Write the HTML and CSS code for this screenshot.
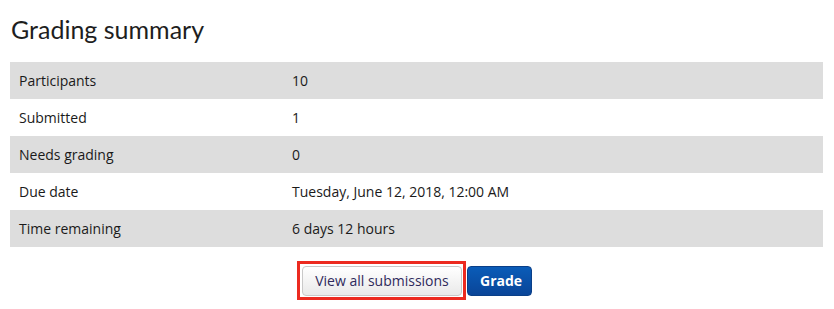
FILE: index.html
```html
<!DOCTYPE html>
<html lang="en">
<head>
<meta charset="utf-8">
<title>Grading summary</title>
<link rel="stylesheet" href="styles.css">
</head>
<body>
<div class="page">
  <h2 class="title">Grading summary</h2>
  <table class="summary">
    <tbody>
      <tr class="shade"><td class="label">Participants</td><td>10</td></tr>
      <tr><td class="label">Submitted</td><td>1</td></tr>
      <tr class="shade"><td class="label">Needs grading</td><td>0</td></tr>
      <tr><td class="label">Due date</td><td>Tuesday, June 12, 2018, 12:00 AM</td></tr>
      <tr class="shade"><td class="label">Time remaining</td><td>6 days 12 hours</td></tr>
    </tbody>
  </table>
  <div class="actions">
    <span class="highlight"><button class="btn btn-secondary" type="button">View all submissions</button></span>
    <button class="btn btn-primary" type="button">Grade</button>
  </div>
</div>
</body>
</html>
```

FILE: styles.css
```css
html, body {
  margin: 0;
  padding: 0;
  background: #ffffff;
}

.page {
  padding: 0 11px 0 10px;
  font-family: "Open Sans", "Liberation Sans", sans-serif;
  font-size: 14px;
  color: #1a1a1a;
}

.title {
  margin: 0;
  padding: 14px 0 0 1px;
  height: 62px;
  box-sizing: border-box;
  font-family: "Lato", "Open Sans", sans-serif;
  font-weight: 400;
  font-size: 25px;
  line-height: 30px;
  color: #1e1e1e;
}

.summary {
  width: 100%;
  border-collapse: collapse;
}

.summary td {
  padding: 8px 9px;
  line-height: 21px;
  vertical-align: top;
}

.summary td.label {
  width: 255px;
}

.summary tr.shade td {
  background: #dddddd;
}

.actions {
  display: flex;
  justify-content: center;
  align-items: center;
  gap: 1px;
  padding: 14px 4px 0 0;
}

.highlight {
  display: inline-flex;
  border: 3px solid #ec2a20;
  padding: 2px 1px 1px 2px;
}

.btn {
  font-family: "Open Sans", "Liberation Sans", sans-serif;
  font-size: 14px;
  line-height: 20px;
  height: 30px;
  border-radius: 4px;
  cursor: pointer;
  padding: 0 12px;
  margin: 0;
}

.btn-secondary {
  width: 160px;
  color: #2f2a5c;
  background: linear-gradient(#ffffff, #e9e9e9);
  border: 1px solid #c9c9c9;
}

.btn-primary {
  width: 65px;
  font-weight: 700;
  color: #ffffff;
  background: linear-gradient(#0a5cb8, #0a4598);
  border: 1px solid #0a3f88;
}
```
